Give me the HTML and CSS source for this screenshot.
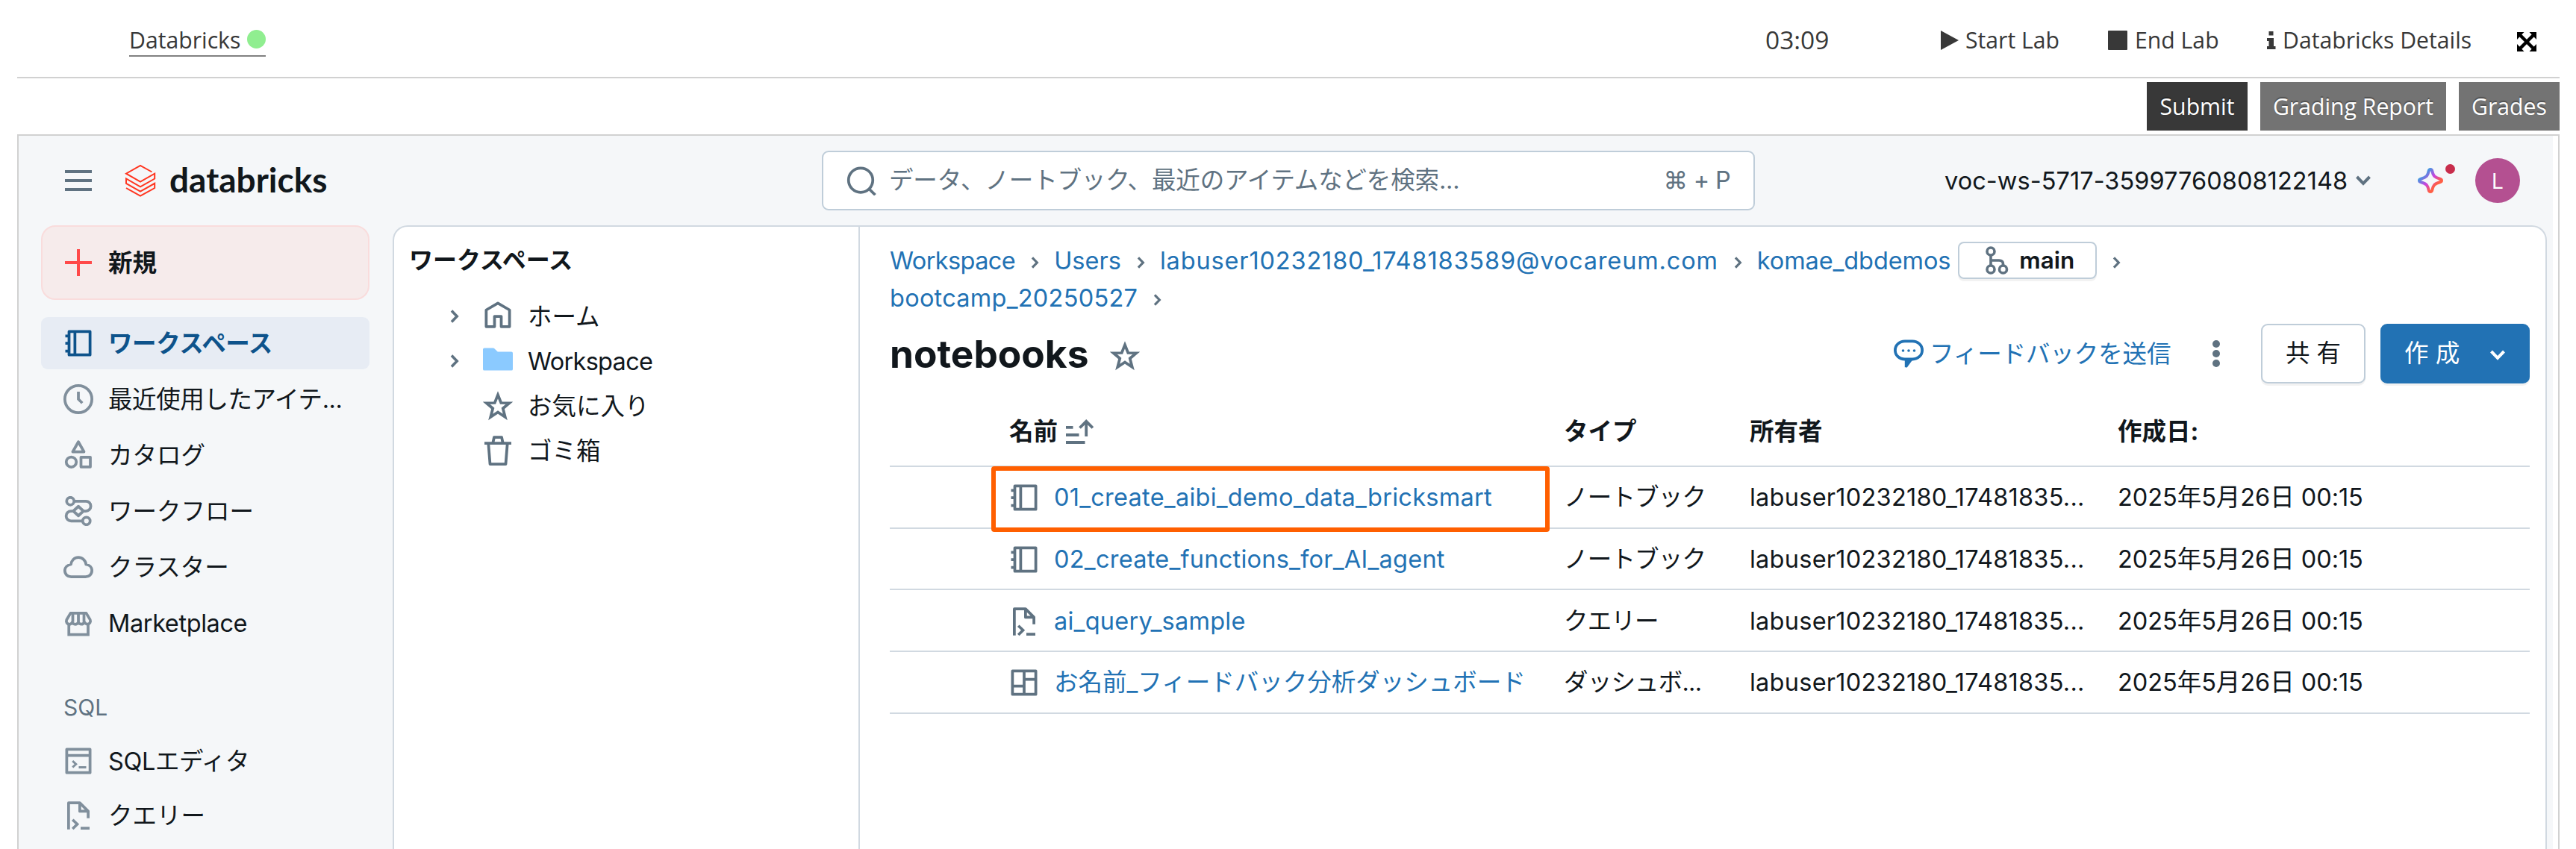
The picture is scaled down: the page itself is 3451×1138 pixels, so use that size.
FILE: index.html
```html
<!DOCTYPE html>
<html lang="ja">
<head>
<meta charset="utf-8">
<title>Databricks</title>
<link rel="stylesheet" href="styles.css">
</head>
<body>
<svg class="sprite" width="0" height="0">
  <symbol id="notebook" viewBox="0 0 16 16"><path stroke="none" fill="currentColor" fill-rule="evenodd" d="M2.25 1.75A.75.75 0 0 1 3 1h11.25a.75.75 0 0 1 .75.75v12.5a.75.75 0 0 1-.75.75H3a.75.75 0 0 1-.75-.75V13H1v-1.5h1.25V8.75H1v-1.5h1.25V4.9H1V3.4h1.25zm1.5.75v11H5.4v-11zm3.150 0v11h6.600v-11z"/></symbol>
  <symbol id="clock" viewBox="0 0 16 16"><circle cx="8" cy="8" r="7.25"/><path d="M8 4v4l2.1 2.1"/></symbol>
  <symbol id="shapes" viewBox="0 0 16 16"><path stroke-linejoin="round" d="M8 .9 5 6.2h6z"/><circle cx="4.2" cy="11.7" r="2.7"/><path stroke-linejoin="round" d="M9.4 9.1h5v5.2h-5z"/></symbol>
  <symbol id="flow" viewBox="0 0 16 16"><circle cx="3.7" cy="2.7" r="2"/><path d="M5.7 2.7H12a2.6 2.6 0 0 1 0 5.3h-1M5 8h-.9a2.65 2.65 0 0 0 0 5.3h6.2"/><path stroke-linejoin="round" d="m8 5.5 2.7 2.5L8 10.5 5.3 8z"/><circle cx="12.3" cy="13.3" r="2"/></symbol>
  <symbol id="cloud" viewBox="0 0 16 16"><path stroke-linejoin="round" d="M4 6.6c.3-2.1 1.9-3.8 4-3.8s3.9 1.700 4.100 3.800c1.900.3 3.150 1.600 3.150 3.300 0 2-1.500 3.350-3.400 3.350H4.100C2.200 13.250.75 11.900.75 9.900.75 8.200 2.100 6.900 4 6.600z"/></symbol>
  <symbol id="store" viewBox="0 0 16 16"><path d="M2.900 8.500v5.750h10.300V8.500"/><path stroke-linejoin="round" d="M3.800 2.750h8.400l2.100 3.500c.5 1.200-.3 2.400-1.400 2.400-.9 0-1.300-.5-1.600-1-.4.600-.9 1-1.650 1S8.300 8.300 8 7.700c-.4.600-.9 1-1.650 1S5 8.300 4.700 7.700c-.4.600-.8 1-1.500 1-1.200 0-2-1.200-1.500-2.400z"/><path d="M5 2.800v4.700M8 2.800v4.700M11 2.800v4.700"/></symbol>
  <symbol id="editor" viewBox="0 0 16 16"><path stroke-linejoin="round" d="M1.750 1.750h12.500v12.500H1.750zM1.750 5h12.500"/><path stroke-width="1.200" d="m4.900 8 1.800 1.700-1.800 1.700M8.200 11.400h4"/></symbol>
  <symbol id="query" viewBox="0 0 16 16"><path stroke-linejoin="round" d="M2.750 15.500V1.250h6l4.500 4.500V9.500M8.750 1.250v4.500h4.500"/><path d="m4.900 10.300 2.500 2.400-2.500 2.500M9.200 14.800H14"/></symbol>
  <symbol id="board" viewBox="0 0 16 16"><path stroke-linejoin="round" d="M1.750 1.750h12.500v12.500H1.750zM8 1.750v12.500M8 6.200h6.250M1.750 9.800H8"/></symbol>
  <symbol id="home" viewBox="0 0 16 16"><path stroke-linejoin="round" d="M1.750 4.600 8 .95l6.250 3.650v8.900H9.800V8H6.200v5.500H1.750z"/></symbol>
  <symbol id="folder" viewBox="0 0 16 16"><path fill="currentColor" d="M0 1.700A.75.75 0 0 1 .75 1h4.700q.5 0 .8.350L7.900 3h7.350a.75.75 0 0 1 .75.75v8.500a.75.75 0 0 1-.75.75H.75a.75.750 0 0 1-.75-.75z"/></symbol>
  <symbol id="star" viewBox="0 0 16 16"><path d="M8 2.100 9.700 6.400 14.100 6.500 10.700 9.400 11.900 14 8 11.400 4.100 14 5.300 9.400 1.900 6.500 6.300 6.400z"/></symbol>
  <symbol id="trash" viewBox="0 0 16 16"><path stroke-linejoin="round" d="M.8 4h14.400M5.300 4l.7-3.200h4L10.700 4M2.900 4l.9 11.250h8.400L13.100 4"/></symbol>
  <symbol id="search" viewBox="0 0 16 16"><circle cx="7.600" cy="7.800" r="6.500"/><path d="m12 12.400 3.400 3.300"/></symbol>
  <symbol id="right" viewBox="0 0 12 18"><path stroke-width="3.600" d="m2 1.500 7.200 7.500L2 16.500"/></symbol>
  <symbol id="down" viewBox="0 0 20 14"><path stroke-width="4" d="m1.500 2 8.500 8.800L18.500 2"/></symbol>
</svg>

<header class="lab-bar">
  <div class="lab-tab"><span>Databricks</span><i class="status-dot"></i></div>
  <div class="timer">03:09</div>
  <div class="lab-link start"><svg width="24" height="26" viewBox="0 0 24 26"><path fill="currentColor" d="M0 0 24 13 0 26z"/></svg><span>Start Lab</span></div>
  <div class="lab-link end"><svg width="26" height="26" viewBox="0 0 26 26"><rect width="26" height="26" rx="1" fill="currentColor"/></svg><span>End Lab</span></div>
  <div class="lab-link details"><svg width="12" height="24" viewBox="0 0 12 24"><path fill="currentColor" d="M2.500 0h6v5.500h-6zM0 9h9v11h2.500v4H0v-4h2.500v-7H0z"/></svg><span>Databricks Details</span></div>
  <svg class="expand" width="26" height="26" viewBox="0 0 26 26"><path stroke="#000" stroke-width="4.500" d="m4 4 18 18M22 4 4 22"/><path d="M0 0h9.500L0 10zM26 0h-9.500L26 10zM0 26h9.500L0 16zM26 26h-9.500L26 16z"/></svg>
</header>

<nav class="grade-bar">
  <button class="grade-btn dark">Submit</button>
  <button class="grade-btn wide">Grading Report</button>
  <button class="grade-btn">Grades</button>
</nav>

<div class="frame">
<div class="app">
  <header class="app-bar">
    <div class="burger"><i></i><i></i><i></i></div>
    <svg class="logo" width="42" height="45" viewBox="0 0 42 45"><path fill="none" stroke="#ff3621" stroke-width="2" d="M36.500 10.500 21 1.800 2 12.700l19 10.800 19.200-10.800v6.800L21 30.300 2 19.500v6.300l19 10.900 19.200-10.900V32L21 42.700 2 32"/></svg>
    <div class="wordmark">databricks</div>
    <div class="search">
      <svg class="ico"><use href="#search"/></svg>
      <span class="placeholder">データ、ノートブック、最近のアイテムなどを検索...</span>
      <span class="keys">⌘ + P</span>
    </div>
    <div class="workspace-name">voc-ws-5717-35997760808122148</div>
    <svg class="down"><use href="#down"/></svg>
    <div class="assistant">
      <svg width="36" height="36" viewBox="0 0 36 36"><defs><linearGradient id="spark" x1="0" y1="0" x2="1" y2="1"><stop offset=".2" stop-color="#4299e0"/><stop offset=".48" stop-color="#ca42e0"/><stop offset=".72" stop-color="#ff5f46"/></linearGradient></defs><path fill="none" stroke="url(#spark)" stroke-width="4" stroke-linejoin="round" d="M18 3c1.600 0 2 1 2.300 2.200C21.600 11 22.500 13.500 30.500 15.700 32 16.100 33 16.800 33 18s-1 1.900-2.500 2.300C22.500 22.500 21.600 25 20.300 30.800 20 32 19.600 33 18 33s-2-1-2.300-2.200C14.400 25 13.500 22.500 5.500 20.300 4 19.900 3 19.200 3 18s1-1.900 2.500-2.300C13.500 13.500 14.400 11 15.700 5.200 16 4 16.400 3 18 3z"/></svg>
      <i class="badge"></i>
    </div>
    <div class="avatar">L</div>
  </header>

  <div class="app-body">
    <aside class="sidebar">
      <div class="new-btn"><svg width="40" height="40" viewBox="0 0 40 40"><path stroke="#ff4949" stroke-width="4" d="M20 2v36M2 20h36"/></svg><span>新規</span></div>
      <div class="nav-item active"><svg class="ico"><use href="#notebook"/></svg><span>ワークスペース</span></div>
      <div class="nav-item"><svg class="ico"><use href="#clock"/></svg><span class="long">最近使用したアイテ...</span></div>
      <div class="nav-item"><svg class="ico"><use href="#shapes"/></svg><span>カタログ</span></div>
      <div class="nav-item"><svg class="ico"><use href="#flow"/></svg><span>ワークフロー</span></div>
      <div class="nav-item"><svg class="ico"><use href="#cloud"/></svg><span>クラスター</span></div>
      <div class="nav-item"><svg class="ico"><use href="#store"/></svg><span class="long">Marketplace</span></div>
      <div class="nav-heading">SQL</div>
      <div class="nav-item tight"><svg class="ico"><use href="#editor"/></svg><span class="long">SQLエディタ</span></div>
      <div class="nav-item tight"><svg class="ico"><use href="#query"/></svg><span>クエリー</span></div>
    </aside>

    <div class="panel">
      <section class="tree">
        <h2>ワークスペース</h2>
        <div class="tree-row"><svg class="right"><use href="#right"/></svg><svg class="ico"><use href="#home"/></svg><span>ホーム</span></div>
        <div class="tree-row"><svg class="right"><use href="#right"/></svg><svg class="ico folder"><use href="#folder"/></svg><span class="latin">Workspace</span></div>
        <div class="tree-row"><svg class="right hidden"></svg><svg class="ico"><use href="#star"/></svg><span>お気に入り</span></div>
        <div class="tree-row"><svg class="right hidden"></svg><svg class="ico"><use href="#trash"/></svg><span>ゴミ箱</span></div>
      </section>

      <main class="content">
        <div class="crumbs">
          <a class="narrow">Workspace</a><svg class="right"><use href="#right"/></svg>
          <a>Users</a><svg class="right"><use href="#right"/></svg>
          <a class="email">labuser10232180_1748183589@vocareum.com</a><svg class="right"><use href="#right"/></svg>
          <a class="repo">komae_dbdemos</a>
          <span class="branch"><svg width="32" height="38" viewBox="0 0 32 38"><g fill="none" stroke="#5f7281" stroke-width="3.600"><circle cx="8" cy="7" r="5"/><circle cx="8" cy="31" r="5"/><circle cx="24.500" cy="31" r="5"/><path d="M8 12v14M8 19h11q5.500 0 5.500 5v2"/></g></svg><b>main</b></span>
          <svg class="right"><use href="#right"/></svg>
        </div>
        <div class="crumbs"><a class="digits">bootcamp_20250527</a><svg class="right"><use href="#right"/></svg></div>

        <div class="title-row">
          <h1>notebooks</h1>
          <svg class="ico"><use href="#star"/></svg>
          <div class="actions">
            <a class="feedback"><svg width="40" height="40" viewBox="0 0 40 40"><path fill="none" stroke="currentColor" stroke-width="3.800" d="M15 3.400h10c7.500 0 13.100 5.300 13.100 12S32.500 27.500 25 27.500H15C7.500 27.500 1.900 22.200 1.900 15.400S7.500 3.400 15 3.400z"/><g fill="currentColor"><path d="M14.800 27h11.400L18 38.300q-.8.800-1.700 0h-1.500z"/><circle cx="12.500" cy="16" r="1.800"/><circle cx="20" cy="16" r="1.800"/><circle cx="27.500" cy="16" r="1.800"/></g></svg><span>フィードバックを送信</span></a>
            <div class="kebab"><i></i><i></i><i></i></div>
            <button class="share">共 有</button>
            <button class="create"><span>作 成</span><svg class="down"><use href="#down"/></svg></button>
          </div>
        </div>

        <div class="table">
          <div class="tr head">
            <div class="td name"><span>名前</span><svg class="sort" width="40" height="34" viewBox="0 0 40 34"><g fill="none" stroke="#5f7281" stroke-width="3.800"><path d="M1 10.900h9.500M1 21h17.500M1 31h25.500"/><path d="M28.200 23V3M19.500 11.500l8.700-8.700 8.700 8.700"/></g></svg></div>
            <div class="td">タイプ</div><div class="td">所有者</div><div class="td">作成日:</div>
          </div>
          <div class="tr">
            <div class="td name"><svg class="ico"><use href="#notebook"/></svg><a>01_create_aibi_demo_data_bricksmart</a></div>
            <div class="td kind">ノートブック</div><div class="td digits">labuser10232180_17481835...</div><div class="td date">2025年5月26日 00:15</div>
            <div class="highlight"></div>
          </div>
          <div class="tr">
            <div class="td name"><svg class="ico"><use href="#notebook"/></svg><a>02_create_functions_for_AI_agent</a></div>
            <div class="td kind">ノートブック</div><div class="td digits">labuser10232180_17481835...</div><div class="td date">2025年5月26日 00:15</div>
          </div>
          <div class="tr">
            <div class="td name"><svg class="ico"><use href="#query"/></svg><a>ai_query_sample</a></div>
            <div class="td kind">クエリー</div><div class="td digits">labuser10232180_17481835...</div><div class="td date">2025年5月26日 00:15</div>
          </div>
          <div class="tr">
            <div class="td name"><svg class="ico"><use href="#board"/></svg><a class="jp">お名前_フィードバック分析ダッシュボード</a></div>
            <div class="td kind">ダッシュボ...</div><div class="td digits">labuser10232180_17481835...</div><div class="td date">2025年5月26日 00:15</div>
          </div>
        </div>
      </main>
    </div>
  </div>
</div>
</div>
</body>
</html>
```
FILE: styles.css
```css
* { box-sizing: border-box; margin: 0; padding: 0; }

body {
  width: 3451px;
  height: 1138px;
  overflow: hidden;
  background: #fff;
  color: #11171c;
  font: 32.5px/40px Inter, "Noto Sans CJK JP", sans-serif;
  white-space: nowrap;
}

svg { display: block; flex: none; }
.sprite { height: 0; }
button { font: inherit; border: 0; }
i { display: block; flex: none; }

.ico, .right, .down { fill: none; stroke: currentColor; stroke-width: 1.5; color: #5f7281; }
.ico { width: 40px; height: 40px; }
.right { width: 12px; height: 18px; }
.down { width: 20px; height: 14px; }

/* Lab toolbar */
.lab-bar {
  display: flex;
  align-items: flex-start;
  height: 105px;
  width: 3406px;
  margin-left: 23px;
  padding: 33px 0 0 150px;
  border-bottom: 2px solid #d1d1d1;
  color: #383838;
  font: 30.2px/41px "Open Sans", sans-serif;
}
.lab-tab {
  display: flex;
  justify-content: space-between;
  width: 183px;
  height: 43px;
  border-bottom: 2px solid #808080;
}
.status-dot {
  width: 25px;
  height: 25px;
  margin-top: 7px;
  border-radius: 50%;
  background: #90ee90;
}
.timer { width: 91px; margin-left: 2009px; font-size: 33.5px; }
.lab-link { display: flex; align-items: center; }
.start { width: 160px; margin-left: 144px; gap: 9px; }
.end { width: 148px; margin-left: 64px; gap: 10px; }
.details { width: 274px; margin-left: 65px; gap: 9px; }
.expand { margin: 10px 0 0 61px; }

.grade-bar {
  display: flex;
  justify-content: flex-end;
  gap: 17px;
  height: 75px;
  padding: 5px 22px 5px 0;
}
.grade-btn {
  width: 135px;
  height: 65px;
  background: #737373;
  color: #fff;
  font: 30.2px/64px "Open Sans", sans-serif;
  text-shadow: 0 -2px 1px rgba(0, 0, 0, .3);
}
.grade-btn.dark { background: #383838; }
.grade-btn.wide { width: 249px; }

/* Embedded application */
.frame {
  width: 3406px;
  height: 958px;
  margin-left: 23px;
  border: 2px solid #d1d1d1;
  border-bottom: 0;
}
.app { width: 3395px; height: 956px; background: #f5f7f9; overflow: hidden; }
.app-bar { display: flex; align-items: center; height: 120px; padding-left: 62px; }
.burger { display: grid; gap: 8px; width: 36px; }
.burger i { height: 4px; background: #5f7281; }
.logo { margin-left: 44px; }
.wordmark {
  width: 215px;
  margin: -2px 0 0 18px;
  font: 700 46px/60px Lato, sans-serif;
}
.search {
  display: flex;
  align-items: center;
  width: 1250px;
  height: 80px;
  margin-left: 659px;
  padding: 0 31px 0 31px;
  border: 2px solid #bfcdd9;
  border-radius: 9px;
  background: #fff;
  color: #5f7281;
}
.placeholder { margin-left: 17px; letter-spacing: -.15px; }
.keys { margin-left: auto; letter-spacing: -.7px; }
.workspace-name { width: 543px; margin-left: 254px; padding-top: 1px; letter-spacing: .05px; }
.app-bar > .down { margin-left: 8px; }
.assistant { position: relative; width: 36px; margin-left: 62px; }
.badge {
  position: absolute;
  left: 38px;
  top: -4px;
  width: 13px;
  height: 13px;
  border-radius: 50%;
  background: #c82d4c;
}
.avatar {
  width: 60px;
  height: 60px;
  margin-left: 42px;
  border-radius: 50%;
  background: #b45091;
  color: #fff;
  font-size: 28px;
  line-height: 62px;
  text-align: center;
}

.app-body { display: flex; height: 836px; }
.sidebar { width: 501px; padding: 0 31px 0 30px; }
.new-btn {
  display: flex;
  align-items: center;
  gap: 20px;
  height: 100px;
  margin-bottom: 23px;
  padding-left: 28px;
  border: 2px solid #f9dcdc;
  border-radius: 19px;
  background: #f6ebeb;
  font-weight: 700;
}
.new-btn span, .nav-item span, .tree-row span { padding-top: 2px; }
.nav-item {
  display: flex;
  align-items: center;
  gap: 20px;
  height: 70px;
  margin-bottom: 5px;
  padding-left: 30px;
  border-radius: 9px;
}
.nav-item .ico { color: #808f9c; }
.nav-item.tight { margin-bottom: 3px; }
.nav-item.active { background: #e7ecf4; color: #0e538b; font-weight: 700; letter-spacing: -.4px; }
.nav-item.active .ico { color: #0e538b; }
.long { letter-spacing: -.4px; }
.nav-heading { height: 110px; padding-left: 30px; color: #5f7281; font-size: 30px; line-height: 147px; }

.panel {
  display: flex;
  width: 2886px;
  border: 2px solid #d1d9e1;
  border-bottom: 0;
  border-radius: 20px 20px 0 0;
  background: #fff;
}
.tree { width: 624px; padding-left: 20px; border-right: 2px solid #d1d9e1; }
.tree h2 { font-size: 32px; font-weight: 700; line-height: 90px; }
.tree-row { display: flex; align-items: center; height: 60px; padding-left: 55px; }
.tree-row .ico { margin: 0 20px 0 32px; }
.tree-row .folder { color: #8bcaff; stroke: none; }
.tree-row .latin { letter-spacing: -.7px; }
.hidden { visibility: hidden; }

.content { width: 2258px; padding: 20px 21px 0 40px; }
.content a { color: #2272b4; }
.digits { letter-spacing: .25px; }
.crumbs { display: flex; align-items: center; height: 50px; }
.crumbs a { padding-top: 2px; }
.crumbs .right { margin: 6px 20px 0 21px; width: 11px; height: 16px; }
.crumbs .narrow { letter-spacing: -.6px; }
.crumbs .email { letter-spacing: .85px; }
.crumbs .repo { letter-spacing: -.1px; }
.branch {
  display: flex;
  align-items: center;
  gap: 14px;
  width: 186px;
  height: 50px;
  margin-left: 10px;
  padding-left: 34px;
  border: 2px solid #bfcdd9;
  border-radius: 8px;
  box-shadow: 0 3px 0 rgba(0, 0, 0, .05);
}
.branch b { font-size: 31.5px; font-weight: 600; }

.title-row { display: flex; align-items: center; height: 80px; margin-top: 10px; }
h1 { width: 266px; font-size: 51.4px; font-weight: 700; line-height: 80px; }
.title-row > .ico { margin: 6px 0 0 29px; }
.actions { display: flex; align-items: center; margin-left: auto; }
.feedback { display: flex; align-items: center; gap: 8px; width: 372px; letter-spacing: -.1px; }
.feedback span { padding-top: 2px; }
.kebab { display: grid; gap: 3px; margin: 0 55px; }
.kebab i { width: 10px; height: 10px; border-radius: 50%; background: #5f7281; }
.share, .create { height: 80px; border-radius: 9px; box-shadow: 0 3px 0 rgba(0, 0, 0, .05); }
.share { width: 140px; border: 2px solid #bfcdd9; background: #fff; color: #11171c; }
.create {
  display: flex;
  align-items: center;
  width: 200px;
  margin-left: 20px;
  padding-left: 32px;
  background: #2272b4;
  color: #fff;
}
.create .down { margin: 4px 0 0 41px; color: #fff; }

.table { width: 2197px; }
.tr {
  position: relative;
  display: grid;
  grid-template-columns: 903px 249px 493px 1fr;
  align-items: center;
  height: 82.7px;
  padding-top: 2px;
  border-bottom: 2px solid #d1d9e1;
}
.tr.head { height: 112px; padding-top: 20px; font-weight: 700; }
.name { display: flex; align-items: center; gap: 20px; padding-left: 160px; }
.name a { letter-spacing: .25px; }
.name .jp { letter-spacing: 0; }
.head .name { gap: 10px; }
.kind { letter-spacing: -.8px; }
.date { letter-spacing: -.05px; }
.highlight {
  position: absolute;
  left: 136px;
  top: -1px;
  width: 748px;
  height: 88px;
  border: 6px solid #ff5f00;
  border-radius: 4px;
  z-index: 1;
}
```
